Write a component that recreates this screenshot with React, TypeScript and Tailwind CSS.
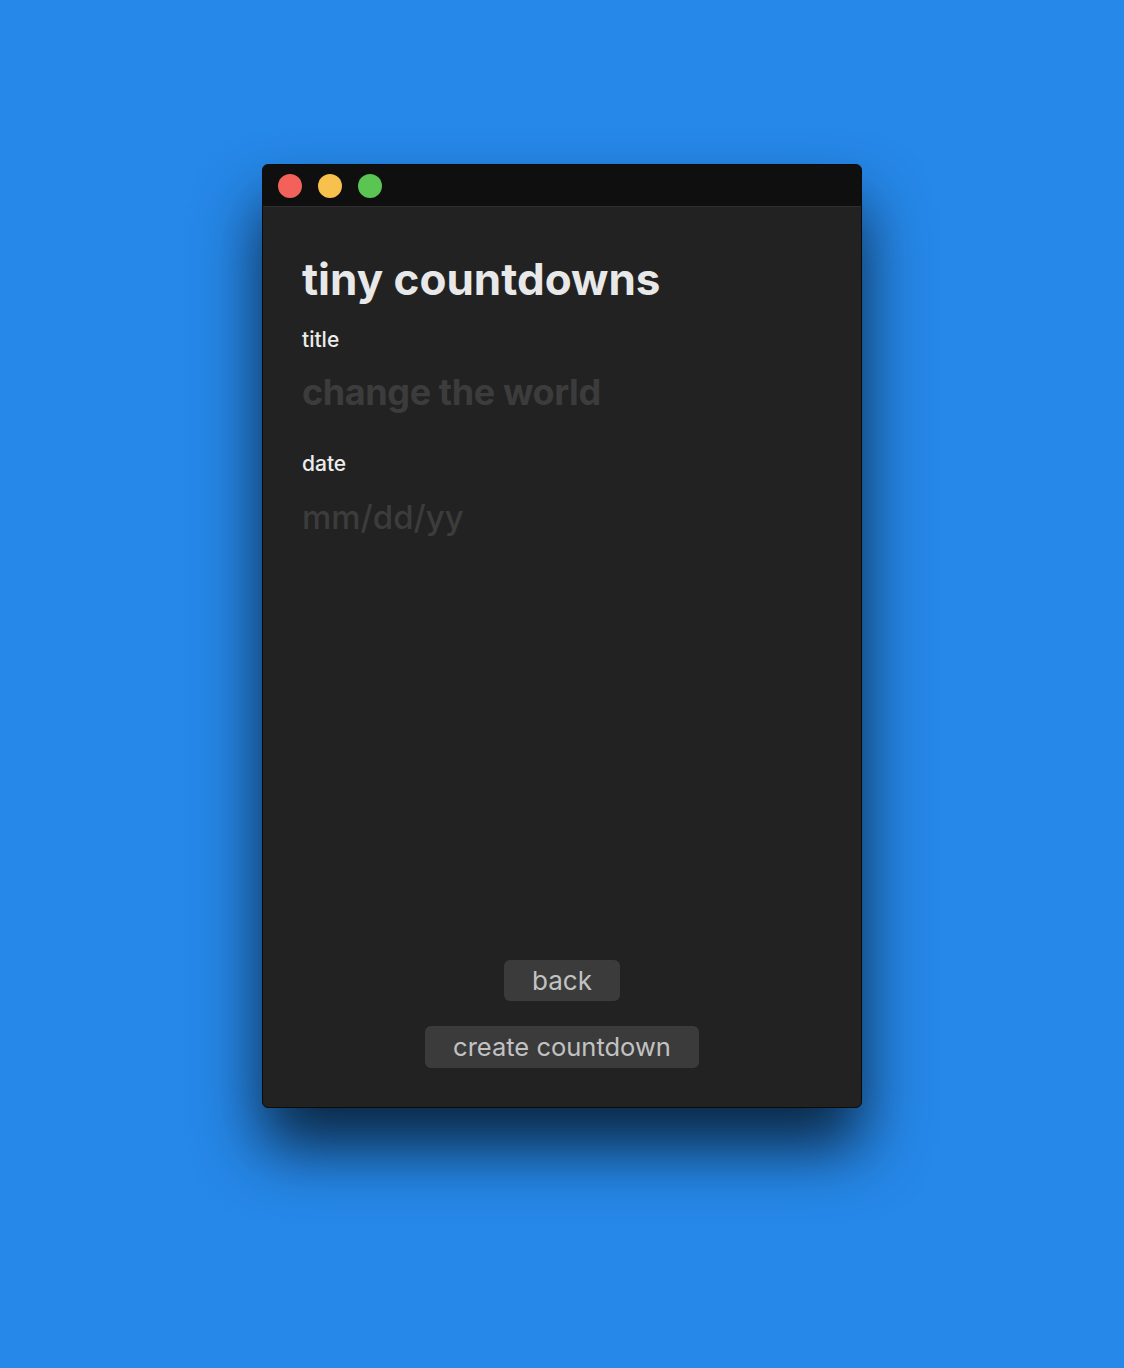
import React from "react";

export default function App() {
  return (
    <div
      className="w-[1124px] h-[1368px] bg-[#2688e9] flex flex-col items-center pt-[164px]"
      style={{ fontFamily: "Inter, 'Noto Sans', sans-serif" }}
    >
      <div className="w-[600px] h-[944px] rounded-[6px] overflow-hidden flex flex-col bg-[#222222] shadow-[0_40px_64px_rgba(0,0,0,0.72)] border border-[#0b0b0b]">
        <div className="h-[42px] shrink-0 bg-[#0f0f0f] border-b border-[#2e2e2e] flex items-center gap-[16px] pl-[15px]">
          <div className="w-[24px] h-[24px] rounded-full bg-[#f2625a]" />
          <div className="w-[24px] h-[24px] rounded-full bg-[#f8c04c]" />
          <div className="w-[24px] h-[24px] rounded-full bg-[#5ac553]" />
        </div>
        <div className="flex-1 flex flex-col px-[39px] pt-[44px] pb-[39px]">
          <h1 className="text-[44px] leading-[56px] font-bold text-[#e8e8e8]">
            tiny countdowns
          </h1>
          <div className="mt-[19px] text-[21px] leading-[28px] font-medium text-[#ececec]">title</div>
          <div className="mt-[16px] text-[36px] leading-[44px] font-bold text-[#3c3c3c] tracking-[-0.4px]">
            change the world
          </div>
          <div className="mt-[36px] text-[21px] leading-[28px] font-medium text-[#ececec]">date</div>
          <div className="mt-[17px] text-[33px] leading-[44px] font-[450] text-[#3c3c3c]">mm/dd/yy</div>
          <div className="flex-1" />
          <div className="flex flex-col items-center gap-[25px]">
            <button className="h-[41px] w-[116px] rounded-[6px] bg-[#3b3b3b] text-[26px] text-[#c2c2c2]">
              back
            </button>
            <button className="h-[42px] w-[274px] rounded-[6px] bg-[#3b3b3b] text-[25.5px] text-[#c2c2c2]">
              create countdown
            </button>
          </div>
        </div>
      </div>
    </div>
  );
}
